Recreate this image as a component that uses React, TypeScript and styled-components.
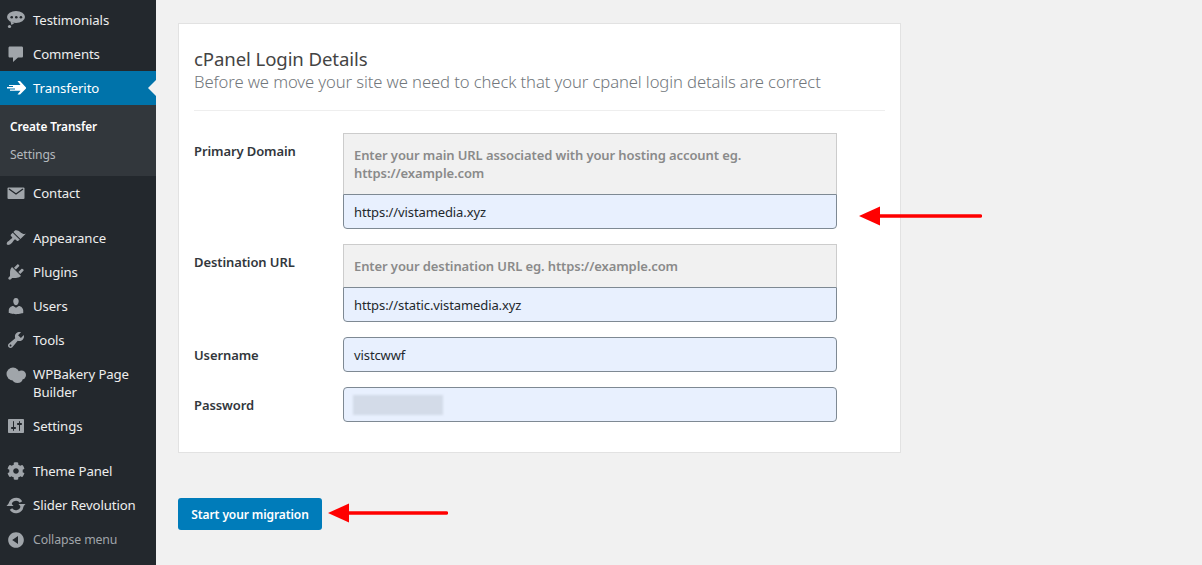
import React from 'react';
import styled, { createGlobalStyle } from 'styled-components';
import { FaCog } from 'react-icons/fa';

const GlobalStyle = createGlobalStyle`
  html, body {
    margin: 0;
    padding: 0;
    height: 100%;
    overflow: hidden;
    background: #f1f1f1;
  }
  * {
    box-sizing: border-box;
  }
`;

const FONT = `"Noto Sans", "Open Sans", "Liberation Sans", sans-serif`;
const MENU_BG = '#23282d';

const Page = styled.div`
  position: relative;
  display: flex;
  width: 1202px;
  height: 565px;
  overflow: hidden;
  font-family: ${FONT};
  background: #f1f1f1;
`;

const Sidebar = styled.nav`
  flex: 0 0 156px;
  padding-top: 3px;
  background: ${MENU_BG};
`;

const MenuItem = styled.div<{ $active?: boolean; $tall?: boolean; $gapBefore?: boolean; $muted?: boolean }>`
  position: relative;
  display: flex;
  align-items: ${p => (p.$tall ? 'flex-start' : 'center')};
  gap: 7px;
  height: ${p => (p.$tall ? '52px' : '34px')};
  margin-top: ${p => (p.$gapBefore ? '11px' : '0')};
  padding: ${p => (p.$tall ? '8px' : p.$muted ? '1px' : '0')} 6px 0 6px;
  background: ${p => (p.$active ? '#0073aa' : 'transparent')};
  color: ${p => (p.$active ? '#fff' : p.$muted ? '#a0a5aa' : '#eee')};
  font-size: ${p => (p.$muted ? '12.3px' : '13.2px')};
  line-height: 18px;
  letter-spacing: -0.1px;

  svg {
    flex: 0 0 20px;
    width: 20px;
    height: 20px;
    fill: ${p => (p.$active ? '#fff' : '#a0a5aa')};
  }
`;

const ActiveNotch = styled.span`
  position: absolute;
  right: 0;
  top: 50%;
  margin-top: -8px;
  border: 8px solid transparent;
  border-left-width: 0;
  border-right-color: #f1f1f1;
`;

const CogIcon = styled(FaCog)`
  && {
    flex-basis: 18px;
    width: 18px;
    height: 18px;
    margin: 0 1px;
  }
`;

const SubMenu = styled.div`
  height: 71px;
  padding: 8px 0 0 10px;
  background: #32373c;
`;

const SubItem = styled.div<{ $current?: boolean }>`
  height: 28px;
  line-height: ${p => (p.$current ? '26px' : '28px')};
  font-size: ${p => (p.$current ? '11.8px' : '12.2px')};
  font-weight: ${p => (p.$current ? 600 : 400)};
  color: ${p => (p.$current ? '#fff' : '#b4b9be')};
  letter-spacing: -0.1px;
`;

const Main = styled.main`
  flex: 1;
  padding: 23px 0 0 22px;
`;

const Card = styled.section`
  width: 723px;
  height: 430px;
  padding: 22px 15px 0;
  background: #fff;
  border: 1px solid #e2e2e2;
`;

const Title = styled.h2`
  margin: 0;
  font-size: 18.6px;
  line-height: 25px;
  font-weight: 400;
  color: #444;
  letter-spacing: -0.1px;
`;

const Subtitle = styled.p`
  margin: 0;
  padding-bottom: 17px;
  font-size: 16.65px;
  line-height: 22px;
  font-weight: 300;
  color: #72777c;
  letter-spacing: -0.1px;
  border-bottom: 1px solid #eee;
`;

const Form = styled.div`
  display: flex;
  flex-direction: column;
  gap: 15px;
  margin-top: 22px;
`;

const Row = styled.div`
  display: grid;
  grid-template-columns: 149px 494px;
`;

const Label = styled.label`
  padding-top: 9px;
  font-size: 13px;
  line-height: 18px;
  font-weight: 600;
  color: #32373c;
  letter-spacing: -0.1px;
`;

const Group = styled.div`
  display: flex;
  flex-direction: column;
`;

const Hint = styled.div<{ $height: number }>`
  height: ${p => p.$height}px;
  padding: 12px 10px 0;
  background: #f1f1f1;
  border: 1px solid #ccc;
  border-bottom: 0;
  font-size: 13px;
  line-height: 18px;
  font-weight: 600;
  color: #8a8a8a;
  letter-spacing: -0.1px;
`;

const Field = styled.div<{ $joined?: boolean }>`
  display: flex;
  align-items: center;
  height: 35px;
  padding: 1px 10px 0;
  background: #e8f0fe;
  border: 1px solid #7e8993;
  border-radius: ${p => (p.$joined ? '0 0 4px 4px' : '4px')};
  font-size: 13px;
  color: #23282d;
  letter-spacing: -0.1px;
`;

const BlurredValue = styled.span`
  display: block;
  width: 90px;
  height: 20px;
  margin-top: -1px;
  margin-left: -1px;
  background: #d3dbe8;
  filter: blur(1px);
`;

const SubmitButton = styled.button`
  display: block;
  width: 144px;
  height: 32px;
  margin-top: 45px;
  padding: 0;
  background: #007cba;
  border: 0;
  border-radius: 3px;
  color: #fff;
  font-family: inherit;
  font-size: 12px;
  font-weight: 600;
  letter-spacing: -0.1px;
`;

const Arrow = styled.svg<{ $left: number; $top: number }>`
  position: absolute;
  left: ${p => p.$left}px;
  top: ${p => p.$top}px;
`;

const RedArrow = ({ left, top, width }: { left: number; top: number; width: number }) => (
  <Arrow $left={left} $top={top} width={width} height={22} viewBox={`0 0 ${width} 22`}>
    <polygon points="0,11 21,1.500 21,20.500" fill="#f00" />
    <line x1="20" y1="11" x2={width - 1.5} y2="11" stroke="#f00" strokeWidth="3.5" strokeLinecap="round" />
  </Arrow>
);

const Icon = ({ d }: { d: string }) => (
  <svg viewBox="0 0 20 20">
    <path d={d} />
  </svg>
);

const TestimonialsIcon = () => (
  <svg viewBox="0 0 20 20">
    <ellipse cx="10" cy="7" rx="9" ry="6" />
    <path d="M4.500 11.500l4 1.500-3 2z" />
    <circle cx="3.500" cy="16.500" r="1.600" />
    <circle cx="5.700" cy="7.300" r="1.300" fill={MENU_BG} />
    <circle cx="10.300" cy="7.300" r="1.300" fill={MENU_BG} />
    <circle cx="14.900" cy="7.300" r="1.300" fill={MENU_BG} />
  </svg>
);

const ContactIcon = () => (
  <svg viewBox="0 0 20 20">
    <rect x="1.500" y="4.500" width="17" height="11.500" rx="1" />
    <polyline points="3,6 10,11 17,6" fill="none" stroke={MENU_BG} strokeWidth="1.400" />
  </svg>
);

const WpBakeryIcon = () => (
  <svg viewBox="0 0 20 20">
    <circle cx="7" cy="9" r="6.500" />
    <circle cx="15.500" cy="10" r="4.500" />
    <ellipse cx="11.500" cy="14.500" rx="5" ry="3.500" />
  </svg>
);

const SliderIcon = () => (
  <svg viewBox="0 0 20 20">
    <path d="M4 10a6 6 0 0 1 11-3" fill="none" stroke="#a0a5aa" strokeWidth="3" />
    <path d="M16 11a6 6 0 0 1-11 3" fill="none" stroke="#a0a5aa" strokeWidth="3" />
    <path d="M12.500 9h7l-3.500 4z" />
    <path d="M.5 11h7l-3.500-4z" />
  </svg>
);

const ICONS = {
  comments: 'M4 2.500h11.500c1 0 1.500.5 1.500 1.500v8c0 1-.5 1.500-1.500 1.500H12l-5 4.500v-4.500H4c-1 0-1.500-.5-1.500-1.500V4c0-1 .5-1.500 1.500-1.500z',
  transfer:
    'M11.500 3H14l6.500 7-6.500 6.500h-2.500l3-3.700H4v-1.400h5v-1H1V9h6V8H3V7h11.500z',
  appearance:
    'M14.480 11.060L7.410 3.990l1.500-1.500c.5-.56 2.300-.47 3.510.32 1.210.8 1.430 1.280 2.910 2.100 1.180.64 2.450 1.260 4.450.85zm-.71.71L6.700 4.700 4.930 6.470c-.39.39-.39 1.020 0 1.410l1.060 1.060c.39.39.39 1.030 0 1.420-.6.6-1.430 1.110-2.210 1.690-.35.26-.7.53-1.010.84C1.430 13.230.1 15.600 1.110 16.590c1 1 3.360-.33 4.710-1.670.31-.31.58-.66.84-1.020.58-.78 1.090-1.610 1.690-2.210.39-.39 1.020-.39 1.410 0l1.060 1.060c.39.39 1.020.39 1.410 0z',
  plugins:
    'M13.110 4.360L9.870 7.600 8 5.730l3.240-3.240c.35-.34 1.050-.2 1.560.32.52.51.66 1.210.31 1.550zm-8 1.770l.91-1.120 9.010 9.010-1.190.84c-.71.71-2.630 1.160-3.820 1.160H6.140L4.900 17.260c-.59.59-1.540.59-2.120 0-.59-.58-.59-1.530 0-2.120l1.240-1.240v-3.880c0-1.130.4-3.190 1.090-3.890zm7.260 3.970l3.240-3.240c.34-.35 1.040-.21 1.550.31.52.51.66 1.210.31 1.550l-3.240 3.250z',
  users:
    'M10 9.250c-2.270 0-2.730-3.440-2.730-3.440C7 4.020 7.820 2 9.970 2c2.160 0 2.980 2.020 2.710 3.810 0 0-.41 3.440-2.680 3.440zm0 2.570L12.720 10c2.390 0 4.520 2.330 4.520 4.530v2.490s-3.650 1.130-7.240 1.130c-3.650 0-7.240-1.130-7.240-1.130v-2.490c0-2.250 1.940-4.480 4.470-4.480z',
  tools:
    'M16.680 9.770c-1.340 1.340-3.300 1.670-4.950.99l-5.410 6.520c-.99.99-2.590.99-3.580 0s-.99-2.590 0-3.570l6.520-5.420c-.68-1.650-.35-3.610.99-4.950 1.280-1.280 3.120-1.620 4.720-1.060l-2.890 2.890 2.820 2.820 2.860-2.870c.53 1.580.18 3.390-1.080 4.650zM3.810 16.210c.4.39 1.040.39 1.430 0 .4-.4.4-1.040 0-1.440-.39-.39-1.030-.39-1.430 0-.39.4-.39 1.040 0 1.440z',
  settings:
    'M18 16V4c0-.55-.45-1-1-1H3c-.55 0-1 .45-1 1v12c0 .55.45 1 1 1h14c.55 0 1-.45 1-1zM8 11h1c.55 0 1 .45 1 1s-.45 1-1 1H8v1.500c0 .28-.22.5-.5.5s-.5-.22-.5-.5V13H6c-.55 0-1-.45-1-1s.45-1 1-1h1V5.500c0-.28.22-.5.5-.5s.5.22.5.5V11zm5-2h-1c-.55 0-1-.45-1-1s.45-1 1-1h1V5.500c0-.28.22-.5.5-.5s.5.22.5.5V7h1c.55 0 1 .45 1 1s-.45 1-1 1h-1v5.500c0 .28-.22.5-.5.5s-.5-.22-.5-.5V9z',
  collapse:
    'M10 2.160c4.330 0 7.840 3.510 7.840 7.840s-3.510 7.840-7.840 7.840S2.160 14.330 2.160 10 5.710 2.160 10 2.160zm2 11.720V6.120L6.180 9.970z',
};

export default function App() {
  return (
    <Page>
      <GlobalStyle />
      <Sidebar>
        <MenuItem><TestimonialsIcon />Testimonials</MenuItem>
        <MenuItem><Icon d={ICONS.comments} />Comments</MenuItem>
        <MenuItem $active>
          <Icon d={ICONS.transfer} />
          Transferito
          <ActiveNotch />
        </MenuItem>
        <SubMenu>
          <SubItem $current>Create Transfer</SubItem>
          <SubItem>Settings</SubItem>
        </SubMenu>
        <MenuItem><ContactIcon />Contact</MenuItem>
        <MenuItem $gapBefore><Icon d={ICONS.appearance} />Appearance</MenuItem>
        <MenuItem><Icon d={ICONS.plugins} />Plugins</MenuItem>
        <MenuItem><Icon d={ICONS.users} />Users</MenuItem>
        <MenuItem><Icon d={ICONS.tools} />Tools</MenuItem>
        <MenuItem $tall><WpBakeryIcon />WPBakery Page Builder</MenuItem>
        <MenuItem><Icon d={ICONS.settings} />Settings</MenuItem>
        <MenuItem $gapBefore><CogIcon />Theme Panel</MenuItem>
        <MenuItem><SliderIcon />Slider Revolution</MenuItem>
        <MenuItem $muted><Icon d={ICONS.collapse} />Collapse menu</MenuItem>
      </Sidebar>

      <Main>
        <Card>
          <Title>cPanel Login Details</Title>
          <Subtitle>Before we move your site we need to check that your cpanel login details are correct</Subtitle>
          <Form>
            <Row>
              <Label>Primary Domain</Label>
              <Group>
                <Hint $height={61}>Enter your main URL associated with your hosting account eg. https://example.com</Hint>
                <Field $joined>https://vistamedia.xyz</Field>
              </Group>
            </Row>
            <Row>
              <Label>Destination URL</Label>
              <Group>
                <Hint $height={43}>Enter your destination URL eg. https://example.com</Hint>
                <Field $joined>https://static.vistamedia.xyz</Field>
              </Group>
            </Row>
            <Row>
              <Label>Username</Label>
              <Field>vistcwwf</Field>
            </Row>
            <Row>
              <Label>Password</Label>
              <Field><BlurredValue /></Field>
            </Row>
          </Form>
        </Card>
        <SubmitButton>Start your migration</SubmitButton>
      </Main>

      <RedArrow left={859} top={205} width={123} />
      <RedArrow left={328} top={502} width={120} />
    </Page>
  );
}
